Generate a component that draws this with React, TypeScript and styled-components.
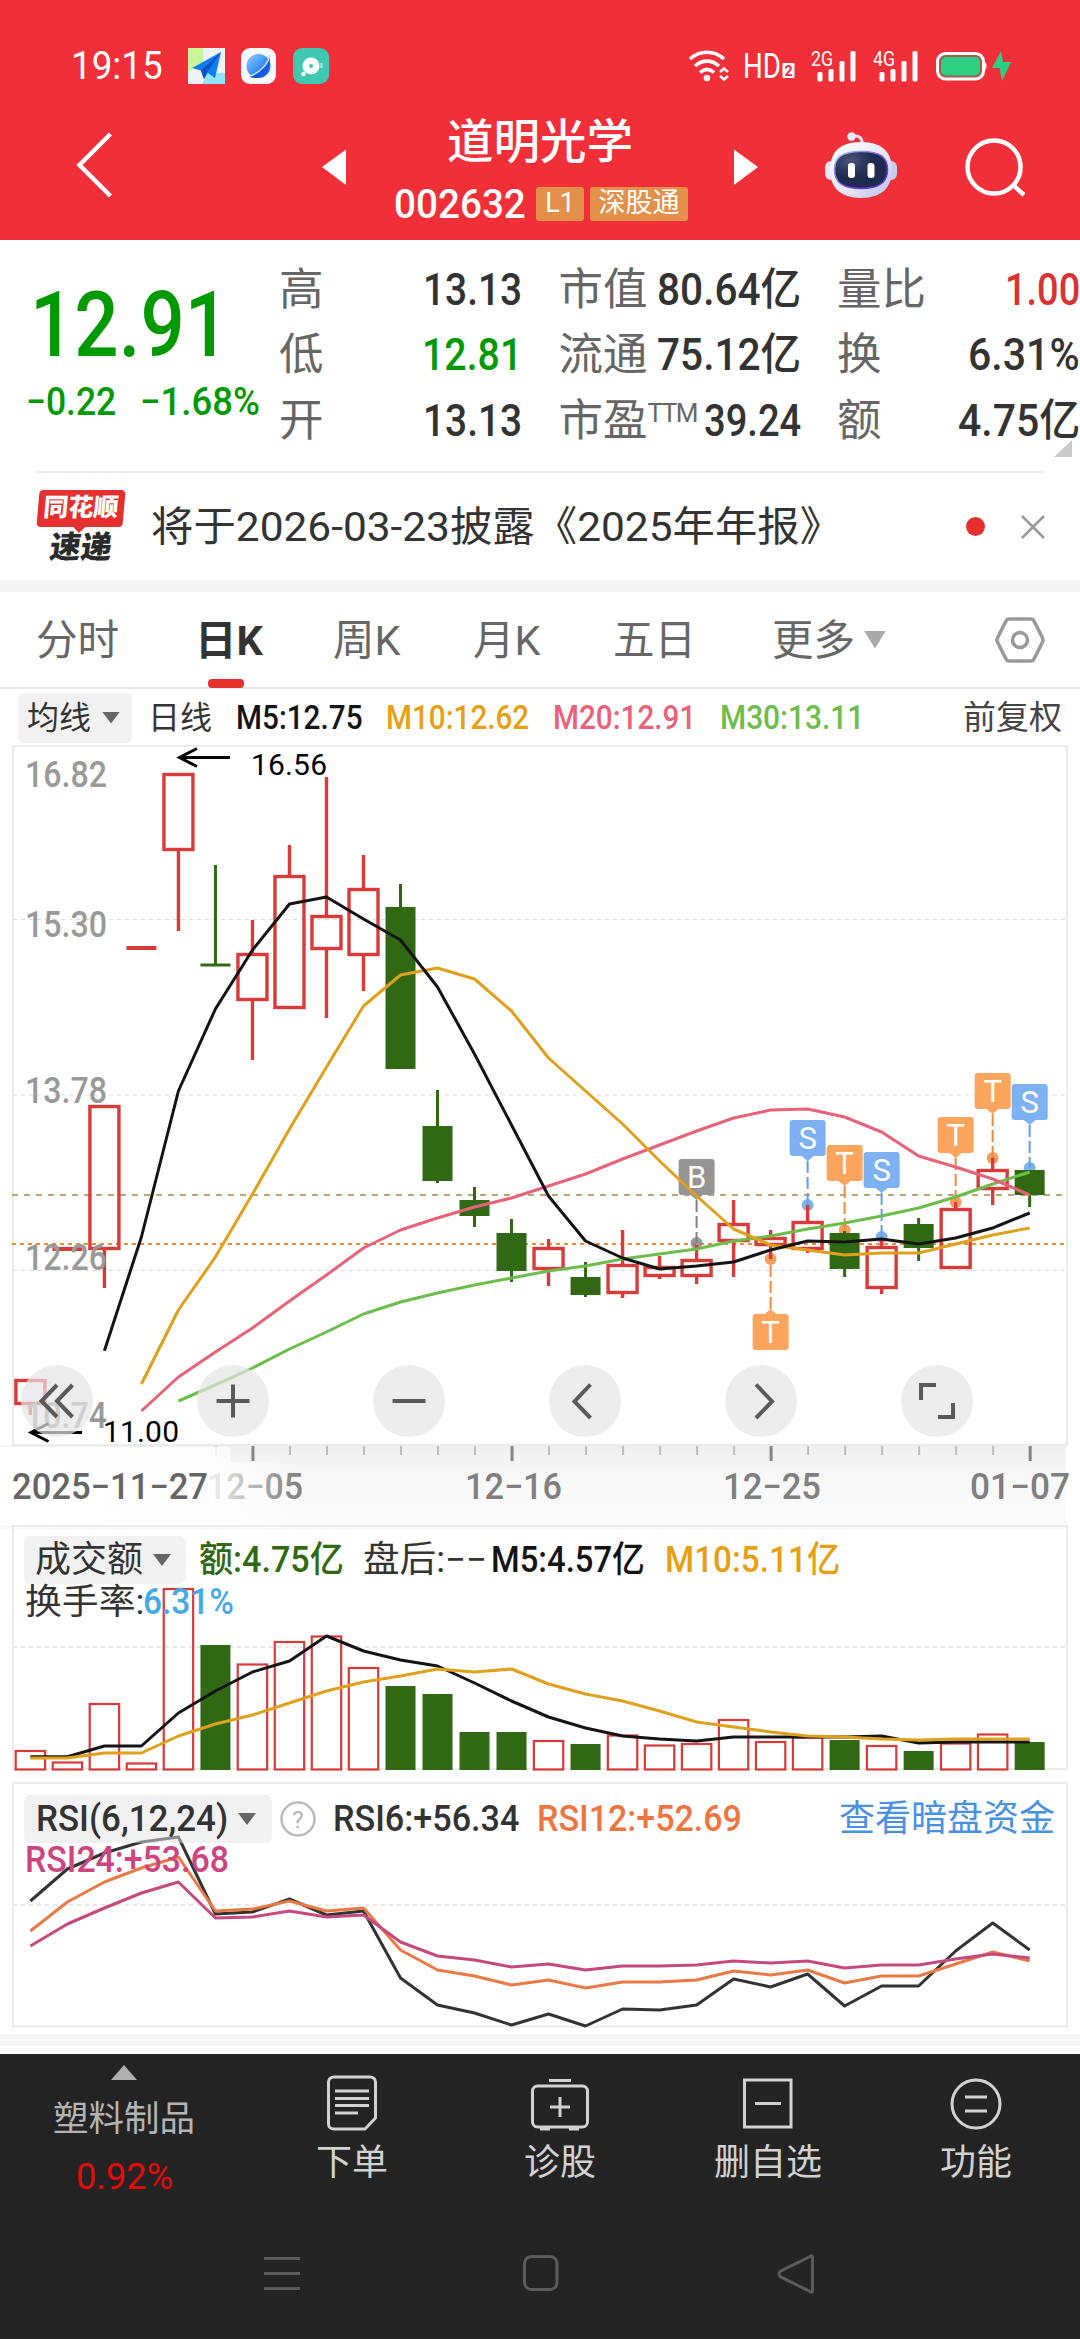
import React, { useLayoutEffect, useRef, useState } from 'react';
import styled, { createGlobalStyle } from 'styled-components';

const Global = createGlobalStyle`
  * { box-sizing: border-box; }
  html, body { margin: 0; padding: 0; background: #fff; }
  body { font-family: Roboto, "Noto Sans CJK SC", sans-serif; color: #333; }
  svg { display: block; flex: none; overflow: visible; }
`;

/* ---------- condensed text: fits its glyphs to a given width ---------- */

const FitBox = styled.span<{ $w: number; $size: number; $color?: string; $weight?: number; $ml?: number; $lh?: number }>`
  display: block;
  flex: none;
  width: ${p => p.$w}px;
  height: ${p => p.$lh ?? p.$size}px;
  line-height: ${p => p.$lh ?? p.$size}px;
  margin-left: ${p => p.$ml ?? 0}px;
  font-size: ${p => p.$size}px;
  font-weight: ${p => p.$weight ?? 400};
  color: ${p => p.$color ?? 'inherit'};
  white-space: nowrap;
`;
const FitInner = styled.span`
  display: inline-block;
  transform-origin: 0 50%;
`;

interface FitProps {
  w: number;
  size: number;
  color?: string;
  weight?: number;
  ml?: number;
  lh?: number;
  children: React.ReactNode;
}

function Fit({ w, size, color, weight, ml, lh, children }: FitProps) {
  const ref = useRef<HTMLSpanElement>(null);
  const [scale, setScale] = useState(1);
  useLayoutEffect(() => {
    if (ref.current && ref.current.offsetWidth) setScale(w / ref.current.offsetWidth);
  }, [w, children]);
  return (
    <FitBox $w={w} $size={size} $color={color} $weight={weight} $ml={ml} $lh={lh}>
      <FitInner ref={ref} style={{ transform: `scaleX(${scale})` }}>{children}</FitInner>
    </FitBox>
  );
}

/* ---------- page frame ---------- */

const Page = styled.div`
  width: 1080px;
  height: 2340px;
  display: flex;
  flex-direction: column;
  overflow: hidden;
  background: #fff;
`;
const Header = styled.header`
  height: 240px;
  flex: none;
  background: #f12f38;
  color: #fff;
`;
const StatusBar = styled.div`
  height: 100px;
  padding: 32px 0 0 71px;
  display: flex;
  align-items: center;
`;
const Gap = styled.span<{ $w: number }>`
  flex: none;
  width: ${p => p.$w}px;
`;
const NavBar = styled.div`
  height: 130px;
  display: flex;
  align-items: center;
  padding-left: 76px;
`;
const TitleBlock = styled.div`
  width: 294px;
  margin: 9px 46px 0 48px;
  display: flex;
  flex-direction: column;
  align-items: center;
`;
const Title = styled.h1`
  margin: 1px 2px 0 0;
  font-size: 46.5px;
  line-height: 46px;
  font-weight: 500;
`;
const CodeRow = styled.div`
  width: 100%;
  height: 34px;
  margin-top: 22px;
  display: flex;
  align-items: center;
`;
const Badge = styled.span<{ $w: number; $ml: number }>`
  flex: none;
  width: ${p => p.$w}px;
  height: 34px;
  margin-left: ${p => p.$ml}px;
  border-radius: 3px;
  background: #e3904b;
  font-size: 27px;
  line-height: 33px;
  text-align: center;
`;

/* ---------- quote ---------- */

const Quote = styled.section`
  position: relative;
  height: 233px;
  flex: none;
  display: flex;
  &::after {
    content: '';
    position: absolute;
    left: 36px;
    right: 36px;
    bottom: 0;
    height: 2px;
    background: #ececec;
  }
`;
const PriceBlock = styled.div`
  width: 279px;
  flex: none;
  color: #009a00;
  padding-top: 35px;
`;
const ChangeRow = styled.div`
  display: flex;
  margin-top: 8px;
  padding-left: 26px;
`;
const Stats = styled.div`
  flex: none;
  padding-top: 17px;
  display: grid;
  grid-template-columns: 243px 242px 243px;
  grid-template-rows: repeat(3, 65.5px);
  column-gap: 36.5px;
`;
const Stat = styled.div`
  display: flex;
  align-items: center;
  justify-content: space-between;
`;
const StatLabel = styled.span`
  font-size: 44.5px;
  line-height: 60px;
  color: #666;
  white-space: nowrap;
`;
const Sup = styled.sup`
  font-size: 26px;
  line-height: 0;
  vertical-align: 14px;
  letter-spacing: -1.5px;
`;
const Corner = styled.i`
  position: absolute;
  right: 8px;
  top: 200px;
  width: 18px;
  height: 17px;
  background: #c9c9c9;
  clip-path: polygon(100% 0, 100% 100%, 0 100%);
`;

/* ---------- news ---------- */

const News = styled.section`
  height: 107px;
  flex: none;
  display: flex;
  align-items: center;
  padding-left: 36px;
`;
const Brand = styled.div`
  position: relative;
  width: 90px;
  height: 74px;
  display: flex;
  flex-direction: column;
  align-items: center;
`;
const BrandTop = styled.div`
  position: relative;
  width: 86px;
  height: 37px;
  border-radius: 4px;
  background: #e5302f;
  transform: skewX(-5deg);
  color: #fff;
  font-weight: 900;
  font-size: 25px;
  line-height: 36px;
  display: flex;
  justify-content: center;
  &::after {
    content: '';
    position: absolute;
    left: 36px;
    top: 36px;
    border: 7px solid transparent;
    border-top: 7px solid #e5302f;
    border-bottom: 0;
  }
`;
const BrandBottom = styled.div`
  margin-top: 5px;
  transform: skewX(-8deg);
  font-weight: 900;
  font-size: 31px;
  line-height: 32px;
  color: #2b2b2b;
`;
const Dot = styled.i`
  width: 19px;
  height: 19px;
  margin: 0 36px 0 124px;
  border-radius: 50%;
  background: #e5302f;
`;
const Band = styled.div<{ $h: number }>`
  height: ${p => p.$h}px;
  flex: none;
  background: #f4f4f4;
`;

/* ---------- tabs ---------- */

const Tabs = styled.nav`
  height: 97px;
  flex: none;
  display: flex;
  align-items: center;
  padding-left: 36px;
  border-bottom: 2px solid #e7e7e7;
  font-size: 41.5px;
  color: #666;
`;
const Tab = styled.span<{ $ml?: number; $w: number; $active?: boolean }>`
  position: relative;
  flex: none;
  width: ${p => p.$w}px;
  margin-left: ${p => p.$ml ?? 0}px;
  height: 95px;
  line-height: 98px;
  white-space: nowrap;
  color: ${p => (p.$active ? '#333' : '#666')};
  font-weight: ${p => (p.$active ? 700 : 400)};
  ${p => p.$active && `
    &::after {
      content: '';
      position: absolute;
      left: 13px;
      bottom: -1px;
      width: 36px;
      height: 9px;
      border-radius: 4px;
      background: #e5302f;
    }`}
`;
const Caret = styled.i<{ $w: number; $h: number; $color: string; $ml?: number }>`
  flex: none;
  width: ${p => p.$w}px;
  height: ${p => p.$h}px;
  margin-left: ${p => p.$ml ?? 0}px;
  background: ${p => p.$color};
  clip-path: polygon(0 0, 100% 0, 50% 100%);
`;

const Legend = styled.div`
  height: 56px;
  flex: none;
  display: flex;
  align-items: center;
  padding: 1px 0 0 18px;
`;
const Chip = styled.span<{ $w: number; $h: number }>`
  flex: none;
  width: ${p => p.$w}px;
  height: ${p => p.$h}px;
  border-radius: 6px;
  background: rgba(228, 228, 228, 0.5);
  display: flex;
  align-items: center;
`;

/* ---------- chart panels ---------- */

const ChartPanel = styled.section<{ $h: number }>`
  position: relative;
  height: ${p => p.$h}px;
  flex: none;
`;
const ToolRow = styled.div`
  position: absolute;
  left: 21px;
  top: 620px;
  display: flex;
  gap: 104px;
`;
const Tool = styled.button`
  width: 72px;
  height: 72px;
  padding: 0;
  border: 0;
  border-radius: 50%;
  background: rgba(228, 228, 228, 0.7);
  display: flex;
  align-items: center;
  justify-content: center;
`;
const PanelHead = styled.div<{ $top: number }>`
  position: absolute;
  left: 24px;
  top: ${p => p.$top}px;
  width: 1040px;
`;
const HeadRow = styled.div<{ $h: number; $pt?: number }>`
  height: ${p => p.$h}px;
  padding-top: ${p => p.$pt ?? 0}px;
  display: flex;
  align-items: center;
`;

/* ---------- bottom ---------- */

const Dock = styled.footer`
  height: 285px;
  flex: none;
  margin-top: 8px;
  background: #242424;
  color: #d2d2d2;
`;
const DockItems = styled.div`
  height: 150px;
  display: grid;
  grid-template-columns: 248px 208px 208px 208px 208px;
`;
const DockItem = styled.div`
  display: flex;
  flex-direction: column;
  align-items: center;
  padding-top: 21px;
  font-size: 36px;
  line-height: 40px;
`;
const DockLabel = styled.span`
  margin-top: 12px;
`;
const Sector = styled.div`
  display: flex;
  flex-direction: column;
  align-items: center;
  padding-top: 11px;
  font-size: 35.5px;
  line-height: 40px;
  color: #b4b4b4;
`;
const UpMark = styled.i`
  width: 26px;
  height: 15px;
  background: #b0b0b0;
  clip-path: polygon(50% 0, 100% 100%, 0 100%);
`;
const SectorName = styled.span`
  margin: 19px 0 19px;
`;
const SystemNav = styled.div`
  height: 135px;
  padding: 49px 0 0 264px;
  display: flex;
  align-items: flex-start;
`;

/* ---------- data ---------- */

const COL0 = 30.4;
const STEP = 37.01;
const cx = (i: number) => COL0 + STEP * i;
const pts = (start: number, ys: number[]) => ys.map((y, k) => `${cx(start + k).toFixed(1)},${y}`).join(' ');

const RED = '#d93a3a';
const GREEN = '#306814';
const BLACK = '#141414';
const AMBER = '#e0a01c';

type Candle = [kind: 'r' | 'g', high: number, top: number, bottom: number, low: number];
const candles: Candle[] = [
  ['r', 1380, 1380, 1406, 1416], ['r', 1250, 1250, 1250, 1250], ['r', 1106, 1106, 1251, 1289],
  ['r', 949, 949, 949, 949], ['r', 774, 774, 852, 932], ['g', 866, 966, 966, 966],
  ['r', 921, 954, 1002, 1061], ['r', 846, 876, 1010, 1010], ['r', 778, 916, 951, 1019],
  ['r', 856, 889, 957, 992], ['g', 885, 908, 1070, 1070], ['g', 1091, 1127, 1182, 1184],
  ['g', 1188, 1201, 1217, 1228], ['g', 1220, 1234, 1272, 1283], ['r', 1240, 1248, 1271, 1287],
  ['g', 1263, 1278, 1296, 1298], ['r', 1231, 1265, 1295, 1299], ['r', 1257, 1267, 1278, 1280],
  ['r', 1246, 1260, 1278, 1285], ['r', 1201, 1224, 1243, 1278], ['r', 1231, 1238, 1247, 1260],
  ['r', 1206, 1222, 1251, 1254], ['g', 1232, 1234, 1270, 1278], ['r', 1240, 1247, 1290, 1295],
  ['g', 1219, 1225, 1249, 1262], ['r', 1203, 1209, 1270, 1270], ['r', 1159, 1170, 1191, 1206],
  ['g', 1171, 1171, 1196, 1208],
];

const ma5 = [1351.7, 1238, 1092, 1010, 951, 905, 898, 920, 941, 988, 1055, 1126, 1197, 1242, 1259, 1270, 1267, 1263, 1251, 1242, 1243, 1240, 1245, 1239, 1229, 1214];
const ma10 = [1385, 1311, 1258, 1195, 1130, 1068, 1007, 976, 969, 980, 1012, 1059, 1092, 1125, 1162, 1197, 1230, 1246, 1251, 1256, 1254, 1254, 1245, 1236, 1229];
const ma20 = [1412, 1378, 1353, 1329, 1302, 1276, 1249, 1231, 1219, 1208, 1199, 1187, 1175, 1160, 1146, 1132, 1119, 1111, 1110, 1118, 1133, 1157, 1168, 1180, 1196];
const ma30 = [1402, 1386, 1369, 1350, 1333, 1315, 1303, 1294, 1286, 1279, 1272, 1267, 1260, 1255, 1250, 1242, 1237, 1230, 1224, 1217, 1209, 1198, 1185, 1173];

const volume: [kind: 'r' | 'g', top: number][] = [
  ['r', 1752], ['r', 1763.5], ['r', 1705], ['r', 1764.5], ['r', 1590], ['g', 1646], ['r', 1665.5], ['r', 1643],
  ['r', 1637.5], ['r', 1669], ['g', 1687], ['g', 1695], ['g', 1733], ['g', 1733], ['r', 1742], ['g', 1745],
  ['r', 1736.5], ['r', 1746.5], ['r', 1745], ['r', 1721], ['r', 1743], ['r', 1738.5], ['g', 1741], ['r', 1747],
  ['g', 1752], ['r', 1744.5], ['r', 1735.5], ['g', 1743],
];
const vma5 = [1757.7, 1757.7, 1747, 1747, 1714, 1692, 1673, 1662, 1637, 1652, 1661, 1667, 1684, 1702, 1718, 1729, 1737, 1740, 1742, 1738, 1738, 1738, 1738, 1737, 1744, 1743, 1743, 1743];
const vma10 = [1759, 1759, 1754, 1754, 1737, 1725, 1716, 1704, 1692, 1683, 1677, 1670, 1673, 1670, 1685, 1695, 1702, 1712, 1723, 1728, 1733, 1737, 1738, 1740, 1741, 1740, 1740, 1740];

const rsi6 = [1902, 1870, 1854, 1843, 1838, 1915, 1913, 1900, 1916, 1912, 1979, 2006, 2014, 2026, 2015, 2027, 2010, 2011, 2006, 1980, 1988, 1975, 2007, 1987, 1987, 1952, 1924, 1951];
const rsi12 = [1932, 1903, 1883, 1869, 1858, 1912, 1910, 1902, 1912, 1909, 1951, 1971, 1977, 1986, 1981, 1989, 1983, 1983, 1981, 1972, 1976, 1971, 1984, 1977, 1977, 1965, 1953, 1962];
const rsi24 = [1947, 1925, 1909, 1894, 1883, 1919, 1918, 1912, 1918, 1916, 1943, 1957, 1961, 1968, 1965, 1971, 1967, 1967, 1966, 1962, 1964, 1962, 1969, 1966, 1966, 1960, 1955, 1959];

type Tone = { box: string; line: string };
const tones: Record<string, Tone> = {
  B: { box: '#959595', line: '#808080' },
  S: { box: '#7db1f1', line: '#5f9fe8' },
  T: { box: '#fda55d', line: '#f08a38' },
};
const markers: { i: number; k: string; box: number; dot: number }[] = [
  { i: 18, k: 'B', box: 1160, dot: 1244 },
  { i: 20, k: 'T', box: 1315, dot: 1260 },
  { i: 21, k: 'S', box: 1121, dot: 1206 },
  { i: 22, k: 'T', box: 1146, dot: 1231 },
  { i: 23, k: 'S', box: 1153, dot: 1238 },
  { i: 25, k: 'T', box: 1118, dot: 1203 },
  { i: 26, k: 'T', box: 1074, dot: 1159 },
  { i: 27, k: 'S', box: 1085, dot: 1169 },
];

/* ---------- chart drawing ---------- */

function Marker({ i, k, box, dot }: { i: number; k: string; box: number; dot: number }) {
  const x = cx(i);
  const t = tones[k];
  const below = box > dot;
  const tip = below ? box - 5 : box + 41;
  const edge = below ? box : box + 36;
  return (
    <g>
      <line x1={x} x2={x} y1={tip} y2={dot} stroke={t.line} strokeWidth={2} strokeDasharray="12 4" />
      <circle cx={x} cy={dot} r={6} fill={t.line} opacity={0.8} />
      <rect x={x - 18} y={box} width={36} height={36} rx={3} fill={t.box} />
      <path d={`M${x - 6} ${edge} L${x} ${tip} L${x + 6} ${edge}Z`} fill={t.box} />
      <text x={x} y={box + 29} fontSize={31} fill="#fff" textAnchor="middle">{k}</text>
    </g>
  );
}

function CandleMark({ c, i }: { c: Candle; i: number }) {
  const [kind, high, top, bottom, low] = c;
  const x = cx(i);
  if (top === bottom) {
    const color = kind === 'r' ? RED : GREEN;
    return (
      <g stroke={color}>
        <line x1={x - 15} x2={x + 15} y1={top} y2={top} strokeWidth={kind === 'r' ? 4 : 3} />
        {high < top && <line x1={x} x2={x} y1={high} y2={top} strokeWidth={3} />}
      </g>
    );
  }
  if (kind === 'g') {
    return (
      <g>
        <line x1={x} x2={x} y1={high} y2={low} stroke={GREEN} strokeWidth={3} />
        <rect x={x - 15} y={top} width={30} height={bottom - top} fill={GREEN} />
      </g>
    );
  }
  return (
    <g stroke={RED} strokeWidth={3.4} fill="none">
      <rect x={x - 14.5} y={top + 1.5} width={29} height={bottom - top - 3} />
      {high < top && <line x1={x} x2={x} y1={high} y2={top} />}
      {low > bottom && <line x1={x} x2={x} y1={bottom} y2={low} />}
    </g>
  );
}

function Line({ start = 0, ys, color, w = 3 }: { start?: number; ys: number[]; color: string; w?: number }) {
  return <polyline points={pts(start, ys)} fill="none" stroke={color} strokeWidth={w} strokeLinejoin="round" />;
}

function FitText({ x, y, w, size, color, children }: { x: number; y: number; w: number; size: number; color: string; children: string }) {
  return (
    <text x={x} y={y} textLength={w} lengthAdjust="spacingAndGlyphs" fontSize={size} fill={color} fontWeight={500}>
      {children}
    </text>
  );
}

function PriceChart() {
  return (
    <svg width={1080} height={780} viewBox="0 746 1080 780">
      <defs>
        <linearGradient id="axisShade" x1="0" y1="0" x2="0" y2="1">
          <stop offset="0" stopColor="#efefef" />
          <stop offset="0.4" stopColor="#f8f8f8" />
          <stop offset="1" stopColor="#fafafa" />
        </linearGradient>
        <linearGradient id="axisFade" gradientUnits="userSpaceOnUse" x1="0" y1="0" x2="310" y2="0">
          <stop offset="0" stopColor="#fff" />
          <stop offset="0.69" stopColor="#fff" stopOpacity="0.85" />
          <stop offset="0.92" stopColor="#fff" stopOpacity="0.1" />
          <stop offset="1" stopColor="#fff" stopOpacity="0" />
        </linearGradient>
      </defs>
      <rect x={0} y={1447} width={1066} height={79} fill="url(#axisShade)" />
      {Array.from({ length: 23 }, (_, k) => k + 5).map(i => {
        const major = i % 7 === 6;
        return <line key={i} x1={cx(i) + 0.5} x2={cx(i) + 0.5} y1={1447} y2={major ? 1462 : 1456} stroke={major ? '#858585' : '#bdbdbd'} strokeWidth={major ? 3 : 2} />;
      })}
      <FitText x={207} y={1500} w={96} size={36} color="#808080">12−05</FitText>
      <rect x={0} y={1463} width={310} height={63} fill="url(#axisFade)" />
      <rect x={0} y={1448} width={230} height={15} fill="url(#axisFade)" />
      <FitText x={12} y={1500} w={196} size={36} color="#666">2025−11−27</FitText>
      <FitText x={465} y={1500} w={97} size={36} color="#808080">12−16</FitText>
      <FitText x={723} y={1500} w={98} size={36} color="#808080">12−25</FitText>
      <FitText x={970} y={1500} w={100} size={36} color="#808080">01−07</FitText>

      <rect x={13} y={747} width={1054} height={699} fill="none" stroke="#ebebeb" strokeWidth={2} />
      {[920.5, 1096, 1271.5].map(y => (
        <line key={y} x1={13} x2={1066} y1={y} y2={y} stroke="#dedede" strokeWidth={1.2} strokeDasharray="4 4" />
      ))}
      <line x1={12} x2={1064} y1={1196} y2={1196} stroke="#bda673" strokeWidth={2} strokeDasharray="6 6" />
      <line x1={12} x2={1064} y1={1245} y2={1245} stroke="#ee8a3a" strokeWidth={2} strokeDasharray="4 4" />

      {markers.map(m => <Marker key={m.i} {...m} />)}
      {candles.map((c, i) => <CandleMark key={i} c={c} i={i} />)}

      {([['16.82', 788], ['15.30', 938], ['13.78', 1104], ['12.26', 1271], ['10.74', 1429]] as [string, number][]).map(([t, y]) => (
        <FitText key={t} x={25} y={y} w={82} size={36} color="#999">{t}</FitText>
      ))}

      <Line start={4} ys={ma30} color="#6cbd4b" />
      <Line start={3} ys={ma20} color="#e8627a" />
      <Line start={3} ys={ma10} color={AMBER} />
      <Line start={2} ys={ma5} color={BLACK} />

      <g stroke="#000" strokeWidth={3} fill="none">
        <path d="M230 758.500H179M197 749.500L179.500 758.500L197 767.500" />
        <path d="M82 1433.500H31M48.500 1424.500L31 1433.500L48.500 1442.500" />
      </g>
      <text x={251} y={776} fontSize={30} textLength={76} fill="#000">16.56</text>
      <text x={103} y={1443} fontSize={30} textLength={76} fill="#000">11.00</text>
    </svg>
  );
}

function VolumeChart() {
  return (
    <svg width={1080} height={257} viewBox="0 1526 1080 257">
      <rect x={0} y={1526} width={1066} height={5} fill="#fafafa" />
      <rect x={13} y={1527} width={1054} height={243} fill="none" stroke="#ebebeb" strokeWidth={2} />
      <line x1={13} x2={1066} y1={1648} y2={1648} stroke="#e8e8e8" strokeWidth={2} strokeDasharray="4 4" />
      {volume.map(([kind, top], i) =>
        kind === 'g' ? (
          <rect key={i} x={cx(i) - 15} y={top} width={30} height={1771 - top} fill={GREEN} />
        ) : (
          <rect key={i} x={cx(i) - 14.7} y={top} width={29.4} height={1770.5 - top} fill="none" stroke={RED} strokeWidth={2.2} />
        ),
      )}
      <Line ys={vma5} color={BLACK} />
      <Line ys={vma10} color={AMBER} />
    </svg>
  );
}

function RsiChart() {
  return (
    <svg width={1080} height={252} viewBox="0 1783 1080 252">
      <rect x={13} y={1784} width={1054} height={243.500} fill="none" stroke="#ebebeb" strokeWidth={2} />
      <line x1={13} x2={1066} y1={1906} y2={1906} stroke="#e8e8e8" strokeWidth={2} strokeDasharray="4 4" />
      <Line ys={rsi6} color="#333" />
      <Line ys={rsi12} color="#e97a45" />
      <Line ys={rsi24} color="#c5487f" />
    </svg>
  );
}

/* ---------- icons ---------- */

const MapIcon = () => (
  <svg width={37} height={36} viewBox="0 0 37 36">
    <rect width={37} height={36} fill="#eef1f6" />
    <path d="M0 0H15V14L0 24Z" fill="#c8f59a" />
    <path d="M20 25H37V36H14Z" fill="#8fe4fb" />
    <path d="M33 4L4 20L13 22.500L16 31L20 25L27 30Z" fill="#0d7df2" />
    <path d="M33 4L13 22.500L16 31L19 24Z" fill="#0553c4" />
  </svg>
);
const BrowserIcon = () => (
  <svg width={35} height={36} viewBox="0 0 35 36">
    <defs>
      <linearGradient id="globe" x1="0" y1="0" x2="1" y2="1">
        <stop offset="0" stopColor="#8fd0ff" />
        <stop offset="0.55" stopColor="#3b8df5" />
        <stop offset="1" stopColor="#1050d8" />
      </linearGradient>
    </defs>
    <rect width={35} height={36} rx={9} fill="#f7f9fc" />
    <circle cx={17.500} cy={18} r={12} fill="url(#globe)" />
    <path d="M29 7C27 16 19 25 8 28.500C18 33 30 28 29 7Z" fill="#1259e0" />
    <path d="M29 7C27 16 19 25 8 28.500" stroke="#bfe3ff" strokeWidth={1.500} fill="none" />
  </svg>
);
const ChatIcon = () => (
  <svg width={36} height={36} viewBox="0 0 36 36">
    <rect width={36} height={36} rx={9} fill="#41c8b3" />
    <circle cx={18} cy={18} r={8.500} fill="#fff" />
    <circle cx={18} cy={18} r={2} fill="#41c8b3" />
    <circle cx={10.500} cy={26} r={2.300} fill="#fff" />
    <path d="M28.500 15V20" stroke="#d8fff8" strokeWidth={1.500} />
  </svg>
);
const WifiIcon = () => (
  <svg width={41} height={32} viewBox="0 0 41 32" fill="none" stroke="#fff" strokeWidth={3.600}>
    <path d="M2 9C12 0 26 0 36 9" />
    <path d="M7 16C14.500 9.500 23.500 9.500 31 16" />
    <path d="M12 22.500C16.500 18.500 21.500 18.500 26 22.500" />
    <circle cx={19} cy={28} r={3.300} fill="#fff" stroke="none" />
    <path d="M32 22L36 18.500L40 22M32 26L36 29.500L40 26" strokeWidth={2.600} />
  </svg>
);
const HdIcon = () => (
  <svg width={52} height={30} viewBox="0 0 52 30">
    <text x={0} y={27} fontSize={35} textLength={38} lengthAdjust="spacingAndGlyphs" fill="#fff">HD</text>
    <rect x={39.500} y={12} width={12} height={15} rx={1} fill="#fff" />
    <text x={45.500} y={24.500} fontSize={14} fontWeight={700} textAnchor="middle" fill="#f12f38">2</text>
  </svg>
);
const SignalIcon = ({ label }: { label: string }) => (
  <svg width={46} height={32} viewBox="0 0 46 32" fill="#fff">
    <text x={0} y={15.500} fontSize={20} textLength={22} lengthAdjust="spacingAndGlyphs">{label}</text>
    <rect x={6.500} y={22} width={5} height={9.500} rx={1.500} />
    <rect x={17.500} y={19} width={5} height={12.500} rx={1.500} />
    <rect x={28.500} y={11} width={5} height={20.500} rx={1.500} />
    <rect x={39.500} y={1} width={5} height={30.500} rx={1.500} />
  </svg>
);
const BatteryIcon = () => (
  <svg width={76} height={32} viewBox="0 0 76 32">
    <rect x={1.500} y={3.500} width={46} height={25.500} rx={8} fill="#ad5648" stroke="#fff" strokeWidth={3} />
    <rect x={5} y={7} width={39} height={18.500} rx={5} fill="#2bd083" />
    <path d="M49 12C51 13.500 51 18.500 49 20Z" fill="#fff" />
    <path d="M65 1L56 18H63.500L66 31L75 12H67Z" fill="#2bd083" />
  </svg>
);
const RobotIcon = () => (
  <svg width={74} height={68} viewBox="0 0 74 68">
    <defs>
      <linearGradient id="shell" x1="0" y1="0" x2="1" y2="1">
        <stop offset="0" stopColor="#fff" />
        <stop offset="0.6" stopColor="#e3e4f6" />
        <stop offset="1" stopColor="#b9bbe6" />
      </linearGradient>
      <linearGradient id="rim" x1="0" y1="0" x2="1" y2="1">
        <stop offset="0" stopColor="#9bdcf0" />
        <stop offset="0.5" stopColor="#7a4fe0" />
        <stop offset="1" stopColor="#4a2fd0" />
      </linearGradient>
      <radialGradient id="visor" cx="0.3" cy="0.25" r="0.9">
        <stop offset="0" stopColor="#4a5478" />
        <stop offset="0.5" stopColor="#1f2a4f" />
        <stop offset="1" stopColor="#232c54" />
      </radialGradient>
    </defs>
    <path d="M28 5.500C35 3.500 38 7 38.500 13" stroke="#dfe0f4" strokeWidth={3} fill="none" />
    <circle cx={27.500} cy={5.500} r={4.200} fill="#ececf8" />
    <rect x={1} y={30} width={12} height={19} rx={6} fill="#e6e6f6" />
    <rect x={61} y={30} width={12} height={19} rx={6} fill="#c9caec" />
    <path d="M37 11C60 11 68 23 68 39C68 56 58 67 37 67C16 67 6 56 6 39C6 23 14 11 37 11Z" fill="url(#shell)" />
    <path d="M37 20.500C57 20.500 63.500 27 63.500 38.500C63.500 51 56 57.500 37 57.500C18 57.500 10.500 51 10.500 38.500C10.500 27 17 20.500 37 20.500Z" fill="url(#visor)" stroke="url(#rim)" strokeWidth={1.600} />
    <rect x={24} y={32} width={7} height={15} rx={3} fill="#fff" />
    <rect x={43.500} y={32} width={7} height={15} rx={3} fill="#fff" />
  </svg>
);

const stroke = { fill: 'none', stroke: '#5a5a5a', strokeWidth: 4 } as const;
const toolIcons = [
  <svg key="first" width={36} height={36} viewBox="0 0 36 36" {...stroke}><path d="M18 2L2.500 18L18 34M33.500 2L18 18L33.500 34" /></svg>,
  <svg key="in" width={36} height={36} viewBox="0 0 36 36" {...stroke}><path d="M18 1.500V34.500M1.500 18H34.500" /></svg>,
  <svg key="out" width={36} height={36} viewBox="0 0 36 36" {...stroke}><path d="M1.500 18H34.500" /></svg>,
  <svg key="prev" width={36} height={36} viewBox="0 0 36 36" {...stroke}><path d="M23.500 1.500L7.500 18.500L23.500 35" /></svg>,
  <svg key="next" width={36} height={36} viewBox="0 0 36 36" {...stroke}><path d="M13 1.500L29 18.500L13 35" /></svg>,
  <svg key="full" width={40} height={40} viewBox="0 0 40 40" {...stroke}><path d="M4 19V4H19M36 22V36H21" /></svg>,
];

const dockIcons: [React.ReactNode, string][] = [
  [
    <svg width={50} height={56} viewBox="0 0 50 56" fill="none" stroke="#d2d2d2" strokeWidth={3}>
      <path d="M7 2H43C46 2 48.500 4 48.500 7V43L38 54H7C4 54 1.500 52 1.500 49V7C1.500 4 4 2 7 2Z" />
      <path d="M8 16H42M8 23.500H42M8 30.500H42M8 38H31" />
    </svg>,
    '下单',
  ],
  [
    <svg width={58} height={56} viewBox="0 0 58 56" fill="none" stroke="#d2d2d2" strokeWidth={3}>
      <rect x={1.500} y={11} width={55} height={41} rx={5} />
      <path d="M18 5.500H40M9 54H19M38 54H48M29 22V42M19 32H39" />
    </svg>,
    '诊股',
  ],
  [
    <svg width={50} height={56} viewBox="0 0 50 56" fill="none" stroke="#d2d2d2" strokeWidth={3}>
      <rect x={1.500} y={5} width={46.500} height={47} />
      <path d="M12 28.500H38" />
    </svg>,
    '删自选',
  ],
  [
    <svg width={52} height={56} viewBox="0 0 52 56" fill="none" stroke="#d2d2d2" strokeWidth={3}>
      <circle cx={26} cy={29} r={24} />
      <path d="M15 22H37M15 36H37" />
    </svg>,
    '功能',
  ],
];

const stats: { id: string; label: React.ReactNode; value: string; w: number; color?: string }[] = [
  { id: 'high', label: '高', value: '13.13', w: 99 },
  { id: 'cap', label: '市值', value: '80.64亿', w: 144 },
  { id: 'ratio', label: '量比', value: '1.00', w: 75, color: '#d83232' },
  { id: 'low', label: '低', value: '12.81', w: 100, color: '#009a00' },
  { id: 'float', label: '流通', value: '75.12亿', w: 144 },
  { id: 'turn', label: '换', value: '6.31%', w: 112 },
  { id: 'open', label: '开', value: '13.13', w: 99 },
  { id: 'pe', label: <>市盈<Sup>TTM</Sup></>, value: '39.24', w: 97 },
  { id: 'amount', label: '额', value: '4.75亿', w: 122 },
];

export default function App() {
  return (
    <Page>
      <Global />
      <Header>
        <StatusBar>
          <Fit w={92} size={38}>19:15</Fit>
          <Gap $w={25} /><MapIcon />
          <Gap $w={16} /><BrowserIcon />
          <Gap $w={17} /><ChatIcon />
          <Gap $w={359} /><WifiIcon />
          <Gap $w={14} /><HdIcon />
          <Gap $w={16} /><SignalIcon label="2G" />
          <Gap $w={16} /><SignalIcon label="4G" />
          <Gap $w={17} /><BatteryIcon />
        </StatusBar>
        <NavBar>
          <svg width={37} height={66} viewBox="0 0 37 66" fill="none" stroke="#fff" strokeWidth={4.500}>
            <path d="M34.500 2L3.500 33L34.500 64" />
          </svg>
          <Gap $w={209} />
          <svg width={24} height={36} viewBox="0 0 24 36"><path d="M24 2.500V38L0 20Z" fill="#fff" /></svg>
          <TitleBlock>
            <Title>道明光学</Title>
            <CodeRow>
              <Fit w={132} size={41} weight={500} lh={34}>002632</Fit>
              <Badge $w={48} $ml={10}>L1</Badge>
              <Badge $w={98} $ml={6}>深股通</Badge>
            </CodeRow>
          </TitleBlock>
          <svg width={24} height={36} viewBox="0 0 24 36"><path d="M0 2.500V38L24 20Z" fill="#fff" /></svg>
          <Gap $w={66} />
          <RobotIcon />
          <Gap $w={67} />
          <svg width={62} height={62} viewBox="0 0 62 62" fill="none" stroke="#fff" strokeWidth={4.500}>
            <circle cx={29} cy={33} r={26.500} />
            <path d="M48 51L59 61" />
          </svg>
        </NavBar>
      </Header>

      <Quote>
        <PriceBlock>
          <Fit w={199} size={91} weight={500} ml={30} lh={100}>12.91</Fit>
          <ChangeRow>
            <Fit w={90} size={39} weight={500}>−0.22</Fit>
            <Fit w={120} size={39} weight={500} ml={24}>−1.68%</Fit>
          </ChangeRow>
        </PriceBlock>
        <Stats>
          {stats.map(s => (
            <Stat key={s.id}>
              <StatLabel>{s.label}</StatLabel>
              <Fit w={s.w} size={44} weight={500} color={s.color}>{s.value}</Fit>
            </Stat>
          ))}
        </Stats>
        <Corner />
      </Quote>

      <News>
        <Brand>
          <BrandTop>同花顺</BrandTop>
          <BrandBottom>速递</BrandBottom>
        </Brand>
        <Fit w={691} size={41} ml={25} lh={50}>将于2026-03-23披露《2025年年报》</Fit>
        <Dot />
        <svg width={24} height={24} viewBox="0 0 24 24" stroke="#999" strokeWidth={2.500}>
          <path d="M1 1L23 23M23 1L1 23" />
        </svg>
      </News>
      <Band $h={12} />

      <Tabs>
        <Tab $w={83}>分时</Tab>
        <Tab $w={66} $ml={76} $active>日K</Tab>
        <Tab $w={68} $ml={72}>周K</Tab>
        <Tab $w={68} $ml={72}>月K</Tab>
        <Tab $w={83} $ml={72}>五日</Tab>
        <Tab $w={83} $ml={76}>更多</Tab>
        <Caret $w={22} $h={18} $color="#aaa" $ml={9} />
        <Gap $w={109} />
        <svg width={50} height={46} viewBox="0 0 50 46" fill="none" stroke="#999" strokeWidth={3.500}>
          <path d="M14 2H36Q38 2 39 4L47.500 21Q48.500 23 47.500 25L39 42Q38 44 36 44H14Q12 44 11 42L2.500 25Q1.500 23 2.500 21L11 4Q12 2 14 2Z" />
          <circle cx={25} cy={23} r={7.500} />
        </svg>
      </Tabs>

      <Legend>
        <Chip $w={114} $h={50}>
          <Fit w={64} size={32} ml={9}>均线</Fit>
          <Caret $w={18} $h={12} $color="#666" $ml={11} />
        </Chip>
        <Fit w={64} size={32} ml={16}>日线</Fit>
        <Fit w={127} size={33} weight={500} color="#141414" ml={24}>M5:12.75</Fit>
        <Fit w={143} size={33} weight={500} color="#e6a015" ml={23}>M10:12.62</Fit>
        <Fit w={143} size={33} weight={500} color="#e8627a" ml={24}>M20:12.91</Fit>
        <Fit w={144} size={33} weight={500} color="#6cbd4b" ml={24}>M30:13.11</Fit>
        <Fit w={99} size={33} color="#444" ml={99}>前复权</Fit>
      </Legend>

      <ChartPanel $h={780}>
        <PriceChart />
        <ToolRow>
          {toolIcons.map((icon, i) => <Tool key={i}>{icon}</Tool>)}
        </ToolRow>
      </ChartPanel>

      <ChartPanel $h={257}>
        <VolumeChart />
        <PanelHead $top={11}>
          <HeadRow $h={48}>
            <Chip $w={162} $h={48}>
              <Fit w={108} size={36} ml={11}>成交额</Fit>
              <Caret $w={18} $h={12} $color="#666" $ml={10} />
            </Chip>
            <Fit w={145} size={36} weight={500} color={GREEN} ml={13}>额:4.75亿</Fit>
            <Fit w={124} size={36} ml={19}>盘后:−−</Fit>
            <Fit w={154} size={36} weight={500} color="#141414" ml={4}>M5:4.57亿</Fit>
            <Fit w={175} size={36} weight={500} color="#e6a015" ml={20}>M10:5.11亿</Fit>
          </HeadRow>
          <HeadRow $h={34} $pt={2}>
            <Fit w={119} size={35} ml={1}>换手率:</Fit>
            <Fit w={91} size={36} weight={500} color="#45a9e8" ml={-1}>6.31%</Fit>
          </HeadRow>
        </PanelHead>
      </ChartPanel>

      <ChartPanel $h={252}>
        <RsiChart />
        <PanelHead $top={13}>
          <HeadRow $h={48}>
            <Chip $w={248} $h={48}>
              <Fit w={192} size={36} weight={500} ml={12}>RSI(6,12,24)</Fit>
              <Caret $w={18} $h={12} $color="#666" $ml={10} />
            </Chip>
            <Gap $w={8} />
            <svg width={36} height={36} viewBox="0 0 36 36">
              <circle cx={18} cy={18} r={16.500} fill="none" stroke="#bcbcbc" strokeWidth={2.500} />
              <text x={18} y={26.500} fontSize={24} textAnchor="middle" fill="#b4b4b4">?</text>
            </svg>
            <Fit w={186} size={36} weight={500} ml={17}>RSI6:+56.34</Fit>
            <Fit w={205} size={36} weight={500} color="#ef7540" ml={18}>RSI12:+52.69</Fit>
            <Fit w={216} size={36} color="#4a90e2" ml={97}>查看暗盘资金</Fit>
          </HeadRow>
          <HeadRow $h={34}>
            <Fit w={204} size={36} weight={500} color="#cc4480" ml={1}>RSI24:+53.68</Fit>
          </HeadRow>
        </PanelHead>
      </ChartPanel>
      <Band $h={12} />

      <Dock>
        <DockItems>
          <Sector>
            <UpMark />
            <SectorName>塑料制品</SectorName>
            <Fit w={97} size={37} color="#e30b0b">0.92%</Fit>
          </Sector>
          {dockIcons.map(([icon, label]) => (
            <DockItem key={label}>
              {icon}
              <DockLabel>{label}</DockLabel>
            </DockItem>
          ))}
        </DockItems>
        <SystemNav>
          <svg width={36} height={42} viewBox="0 0 36 42" stroke="#5c5c5c" strokeWidth={3}>
            <path d="M0 5.500H36M0 20.500H36M0 35.500H36" />
          </svg>
          <Gap $w={223} />
          <svg width={36} height={42} viewBox="0 0 36 42" fill="none" stroke="#5c5c5c" strokeWidth={3}>
            <rect x={1.500} y={3.500} width={32.500} height={33} rx={7} />
          </svg>
          <Gap $w={218} />
          <svg width={38} height={42} viewBox="0 0 38 42" fill="none" stroke="#5c5c5c" strokeWidth={3}>
            <path d="M33 3.500Q35.500 1.500 35.500 4.500V37.500Q35.500 40.500 33 38.500L3 23.500Q1 21 3 18.500Z" />
          </svg>
        </SystemNav>
      </Dock>
    </Page>
  );
}
